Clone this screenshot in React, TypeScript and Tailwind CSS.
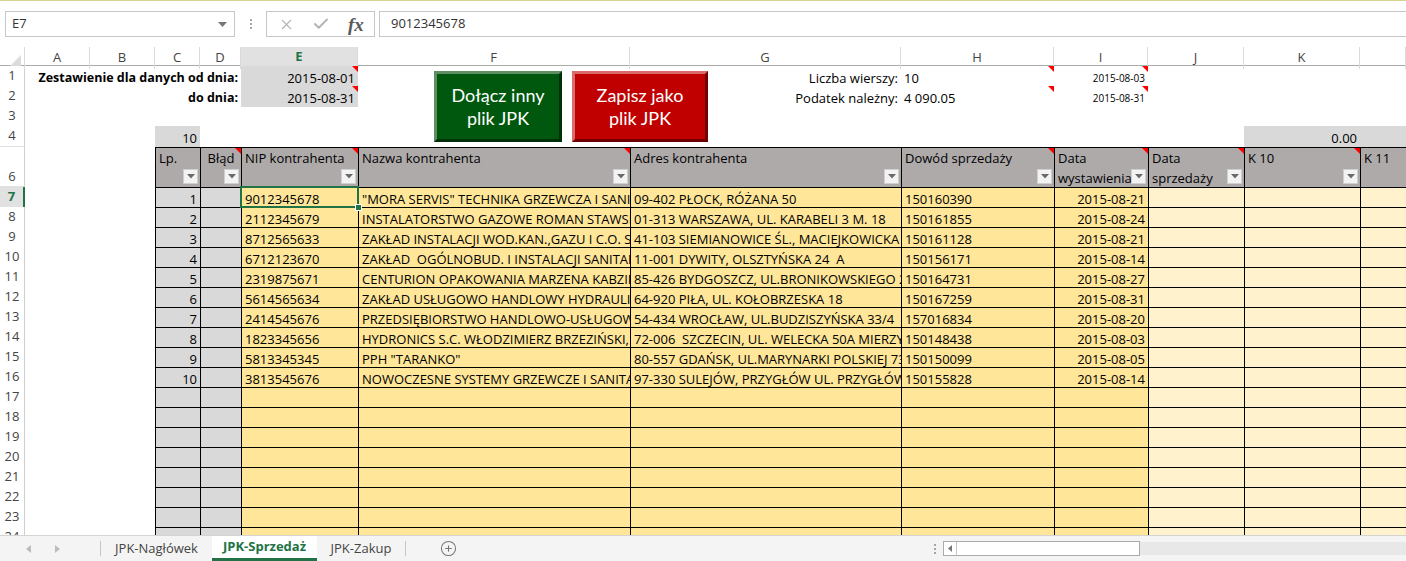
import { X, Check, CirclePlus } from "lucide-react";
import type { ReactNode } from "react";

// column template: row header, A..L, rest
const COLS = "grid grid-cols-[25px_65px_65px_45px_41px_117px_272px_271px_153px_94px_96px_116px_1fr]";

const YEL = "bg-[#ffe699]";
const LIGHT = "bg-[#fff2cc]";
const GREY = "bg-[#d9d9d9]";

const rows: string[][] = [
  ["9012345678", "\"MORA SERVIS\" TECHNIKA GRZEWCZA I SANITARNA", "09-402 PŁOCK, RÓŻANA 50", "150160390", "2015-08-21"],
  ["2112345679", "INSTALATORSTWO GAZOWE ROMAN STAWSKI", "01-313 WARSZAWA, UL. KARABELI 3 M. 18", "150161855", "2015-08-24"],
  ["8712565633", "ZAKŁAD INSTALACJI WOD.KAN.,GAZU I C.O. SPÓŁKA", "41-103 SIEMIANOWICE ŚL., MACIEJKOWICKA 12", "150161128", "2015-08-21"],
  ["6712123670", "ZAKŁAD  OGÓLNOBUD. I INSTALACJI SANITARNYCH", "11-001 DYWITY, OLSZTYŃSKA 24  A", "150156171", "2015-08-14"],
  ["2319875671", "CENTURION OPAKOWANIA MARZENA KABZIŃSKA", "85-426 BYDGOSZCZ, UL.BRONIKOWSKIEGO 2", "150164731", "2015-08-27"],
  ["5614565634", "ZAKŁAD USŁUGOWO HANDLOWY HYDRAULIK", "64-920 PIŁA, UL. KOŁOBRZESKA 18", "150167259", "2015-08-31"],
  ["2414545676", "PRZEDSIĘBIORSTWO HANDLOWO-USŁUGOWE", "54-434 WROCŁAW, UL.BUDZISZYŃSKA 33/4", "157016834", "2015-08-20"],
  ["1823345656", "HYDRONICS S.C. WŁODZIMIERZ BRZEZIŃSKI, ANNA", "72-006  SZCZECIN, UL. WELECKA 50A MIERZYN", "150148438", "2015-08-03"],
  ["5813345345", "PPH \"TARANKO\"", "80-557 GDAŃSK, UL.MARYNARKI POLSKIEJ 73", "150150099", "2015-08-05"],
  ["3813545676", "NOWOCZESNE SYSTEMY GRZEWCZE I SANITARNE", "97-330 SULEJÓW, PRZYGŁÓW UL. PRZYGŁÓWSKA", "150155828", "2015-08-14"],
];

function Tri() {
  return <span className="absolute right-0 top-0 w-0 h-0 border-l-[6px] border-t-[6px] border-l-transparent border-t-[#ff0000]" />;
}

function Cell({
  bg = "",
  right,
  box,
  tri,
  children,
  className = "",
}: {
  bg?: string;
  right?: boolean;
  box?: boolean;
  tri?: boolean;
  children?: ReactNode;
  className?: string;
}) {
  return (
    <div
      className={`relative overflow-hidden whitespace-pre flex items-end leading-[18px] px-[3px] ${box ? "border-l border-t border-black" : ""} ${right ? "justify-end" : ""} ${bg} ${className}`}
    >
      {children}
      {tri && <Tri />}
    </div>
  );
}

function RowHead({ n, active, bottom }: { n: number; active?: boolean; bottom?: boolean }) {
  return (
    <div
      className={`flex justify-center border-b border-b-[#e1e1e1] text-[13px] ${bottom ? "items-end" : "items-center"} ${active ? "bg-[#e1e1e1] text-[#217346] font-bold border-r-2 border-r-[#217346]" : "bg-white text-[#444] border-r border-r-[#cfcfcf]"}`}
    >
      {n}
    </div>
  );
}

function FilterBtn() {
  return (
    <span className="absolute right-[2px] bottom-[3px] w-[15px] h-[15px] bg-[#f3f3f3] border border-[#d0d0d0] flex items-center justify-center">
      <svg width="8" height="5" viewBox="0 0 8 5">
        <path d="M0 0 L8 0 L4 4.5 Z" fill="#6a6a6a" />
      </svg>
    </span>
  );
}

function HeadCell({ label, tri, center, filter = true }: { label: string; tri?: boolean; center?: boolean; filter?: boolean }) {
  return (
    <div
      className={`relative overflow-hidden whitespace-pre border-l border-t border-black bg-[#aeaaaa] px-[3px] leading-[20px] ${center ? "text-center" : ""}`}
    >
      {label}
      {filter && <FilterBtn />}
      {tri && <Tri />}
    </div>
  );
}

function ColHead({ label, active }: { label: string; active?: boolean }) {
  return (
    <div
      className={`flex items-center justify-center border-r border-r-[#dadada] text-[13px] ${active ? "bg-[#e1e1e1] text-[#217346] font-bold border-b-2 border-b-[#217346]" : "text-[#444]"}`}
    >
      {label}
    </div>
  );
}

function FormulaBar() {
  return (
    <div className="h-[46px] shrink-0 flex items-start pt-[10px] pl-[5px] text-[13px] text-[#333]">
      <div className="w-[230px] h-[26px] border border-[#c6c6c6] flex items-center justify-between pl-[6px] pr-[7px]">
        <span>E7</span>
        <svg width="9" height="5" viewBox="0 0 9 5">
          <path d="M0 0 L9 0 L4.5 5 Z" fill="#777" />
        </svg>
      </div>
      <div className="w-[31px] h-[26px] flex flex-col items-center justify-center gap-[2px]">
        <span className="w-[2px] h-[2px] bg-[#a6a6a6]" />
        <span className="w-[2px] h-[2px] bg-[#a6a6a6]" />
        <span className="w-[2px] h-[2px] bg-[#a6a6a6]" />
      </div>
      <div className="w-[109px] h-[26px] border border-[#c6c6c6] flex items-center pl-[11px]">
        <X className="w-[17px] h-[17px] text-[#b3b3b3]" strokeWidth={1.5} />
        <Check className="w-[18px] h-[18px] text-[#b3b3b3] ml-[17px]" strokeWidth={2.5} />
        <span className="ml-[18px] font-['Liberation_Serif',serif] italic font-bold text-[19px] text-[#595959] leading-none">fx</span>
      </div>
      <div className="ml-[4px] flex-1 h-[26px] border border-r-0 border-[#c6c6c6] flex items-center pl-[11px]">9012345678</div>
    </div>
  );
}

function Sheet() {
  return (
    <div className="relative h-[488px] shrink-0 overflow-hidden text-[13px]">
      {/* column letters */}
      <div className={`${COLS} h-[19px] border-b border-[#ababab]`}>
        <div className="relative border-r border-r-[#dadada]">
          <svg className="absolute right-[3px] bottom-[3px]" width="11" height="11" viewBox="0 0 11 11">
            <path d="M11 0 L11 11 L0 11 Z" fill="#dcdcdc" />
          </svg>
        </div>
        <ColHead label="A" />
        <ColHead label="B" />
        <ColHead label="C" />
        <ColHead label="D" />
        <ColHead label="E" active />
        <ColHead label="F" />
        <ColHead label="G" />
        <ColHead label="H" />
        <ColHead label="I" />
        <ColHead label="J" />
        <ColHead label="K" />
        <ColHead label="" />
      </div>

      {/* row 1 */}
      <div className={`${COLS} h-[20px]`}>
        <RowHead n={1} />
        <Cell right className="col-span-4 font-bold text-[12.5px]">Zestawienie dla danych od dnia:</Cell>
        <Cell bg={GREY} right tri>2015-08-01</Cell>
        <Cell />
        <Cell right>Liczba wierszy:</Cell>
        <Cell tri>10</Cell>
        <Cell right tri className="text-[10px]">2015-08-03</Cell>
        <Cell />
        <Cell />
        <Cell />
      </div>
      {/* row 2 */}
      <div className={`${COLS} h-[20px]`}>
        <RowHead n={2} />
        <Cell right className="col-span-4 font-bold text-[12.5px]">do dnia:</Cell>
        <Cell bg={GREY} right tri>2015-08-31</Cell>
        <Cell />
        <Cell right>Podatek należny:</Cell>
        <Cell tri>4 090.05</Cell>
        <Cell right tri className="text-[10px]">2015-08-31</Cell>
        <Cell />
        <Cell />
        <Cell />
      </div>
      {/* row 3 */}
      <div className={`${COLS} h-[20px]`}>
        <RowHead n={3} />
      </div>
      {/* row 4 */}
      <div className={`${COLS} h-[21px]`}>
        <RowHead n={4} />
        <Cell />
        <Cell />
        <Cell bg={GREY} right>10</Cell>
        <Cell />
        <Cell />
        <Cell />
        <Cell />
        <Cell />
        <Cell />
        <Cell />
        <Cell bg={GREY} right>0.00</Cell>
        <Cell bg={GREY} />
      </div>
      {/* row 6 - table header */}
      <div className={`${COLS} h-[40px]`}>
        <RowHead n={6} bottom />
        <div />
        <div />
        <HeadCell label="Lp." />
        <HeadCell label="Błąd" center tri />
        <HeadCell label="NIP kontrahenta" tri />
        <HeadCell label="Nazwa kontrahenta" tri />
        <HeadCell label="Adres kontrahenta" />
        <HeadCell label="Dowód sprzedaży" tri />
        <HeadCell label={"Data\nwystawienia"} tri />
        <HeadCell label={"Data\nsprzedaży"} tri />
        <HeadCell label="K 10" tri />
        <HeadCell label="K 11" filter={false} />
      </div>
      {/* data rows */}
      {Array.from({ length: 18 }).map((_, i) => {
        const r = rows[i];
        return (
          <div key={i} className={`${COLS} h-[20px]`}>
            <RowHead n={7 + i} active={i === 0} />
            <div />
            <div />
            <Cell box bg={GREY} right>{r ? i + 1 : ""}</Cell>
            <Cell box bg={GREY} />
            <Cell box bg={YEL}>{r?.[0]}</Cell>
            <Cell box bg={YEL}>{r?.[1]}</Cell>
            <Cell box bg={YEL}>{r?.[2]}</Cell>
            <Cell box bg={YEL}>{r?.[3]}</Cell>
            <Cell box bg={YEL} right>{r?.[4]}</Cell>
            <Cell box bg={LIGHT} />
            <Cell box bg={LIGHT} />
            <Cell box bg={LIGHT} />
          </div>
        );
      })}

      {/* active cell E7 */}
      <div className="absolute left-[240px] top-[139px] w-[119px] h-[22px] border-2 border-[#217346]" />
      <div className="absolute left-[355px] top-[157px] w-[7px] h-[7px] bg-[#217346] border border-white" />
    </div>
  );
}

function TabBar() {
  return (
    <div className="h-[26px] shrink-0 bg-[#f4f4f4] border-t border-[#d4d4d4] flex items-stretch text-[13px] text-[#444]">
      <div className="w-[100px] flex items-center pl-[26px] gap-[24px]">
        <svg width="5" height="8" viewBox="0 0 5 8">
          <path d="M5 0 L5 8 L0 4 Z" fill="#bcbcbc" />
        </svg>
        <svg width="5" height="8" viewBox="0 0 5 8">
          <path d="M0 0 L0 8 L5 4 Z" fill="#bcbcbc" />
        </svg>
      </div>
      <div className="w-px my-[5px] bg-[#c6c6c6]" />
      <div className="w-[111px] flex items-center justify-center">JPK-Nagłówek</div>
      <div className="w-[105px] flex items-center justify-center bg-white border-b-[3px] border-[#217346] font-bold text-[#217346]">
        JPK-Sprzedaż
      </div>
      <div className="w-[88px] flex items-center justify-center">JPK-Zakup</div>
      <div className="w-px my-[5px] bg-[#c6c6c6]" />
      <div className="w-[84px] flex items-center justify-center">
        <CirclePlus className="w-[17px] h-[17px] text-[#777]" strokeWidth={1.5} />
      </div>
      <div className="flex-1" />
      <div className="w-[16px] flex flex-col items-center justify-center gap-[2px]">
        <span className="w-[2px] h-[2px] bg-[#a6a6a6]" />
        <span className="w-[2px] h-[2px] bg-[#a6a6a6]" />
        <span className="w-[2px] h-[2px] bg-[#a6a6a6]" />
      </div>
      <div className="flex items-center">
        <div className="w-[197px] h-[15px] bg-white border border-[#ababab] flex">
          <div className="w-[13px] border-r border-[#c6c6c6] flex items-center justify-center">
            <svg width="4" height="7" viewBox="0 0 4 7">
              <path d="M4 0 L4 7 L0 3.5 Z" fill="#777" />
            </svg>
          </div>
        </div>
      </div>
      <div className="w-[266px] bg-[#e8e8e8] my-[6px]" />
    </div>
  );
}

export default function App() {
  return (
    <div className="relative w-[1406px] h-[561px] overflow-hidden bg-white flex flex-col font-['Open_Sans',sans-serif] text-[13px] text-black">
      <div className="h-px shrink-0 bg-[#d6d590]" />
      <FormulaBar />
      <Sheet />
      <TabBar />

      {/* macro buttons floating over the sheet */}
      <button className="absolute left-[434px] top-[71px] w-[128px] h-[71px] bg-[#00580e] border-[3px] border-t-[#5e8f63] border-l-[#5e8f63] border-r-[#00300a] border-b-[#00300a] text-white font-['Lato',sans-serif] text-[18px] leading-[23px]">
        Dołącz inny
        <br />
        plik JPK
      </button>
      <button className="absolute left-[572px] top-[71px] w-[136px] h-[71px] bg-[#c00000] border-[3px] border-t-[#db6a6a] border-l-[#db6a6a] border-r-[#700000] border-b-[#700000] text-white font-['Lato',sans-serif] text-[18px] leading-[23px]">
        Zapisz jako
        <br />
        plik JPK
      </button>
    </div>
  );
}
